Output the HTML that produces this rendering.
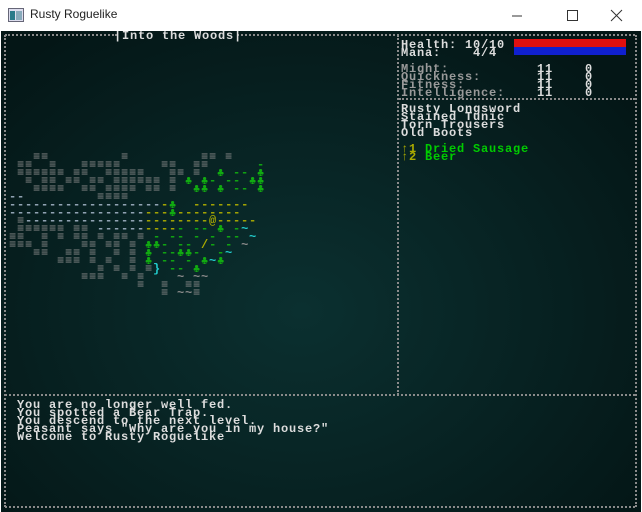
<!DOCTYPE html>
<html><head><meta charset="utf-8"><style>
*{margin:0;padding:0;box-sizing:border-box}
body{width:642px;height:512px;overflow:hidden;background:#fff;font-family:"Liberation Sans",sans-serif;position:relative}
#tb{position:absolute;left:0;top:0;width:642px;height:31px;background:#fff}
#tb .t{position:absolute;left:30px;top:7px;font-size:12px;color:#222}
#term{position:absolute;left:1px;top:31px;width:640px;height:481px;background:radial-gradient(ellipse 420px 340px at 300px 280px,#0b3030 0%,#072222 55%,#041616 100%);overflow:hidden}
.tx{position:absolute;font-family:"Liberation Mono",monospace;font-weight:bold;font-size:12px;letter-spacing:0.8px;line-height:8px;white-space:pre;color:#ddd}
.h{position:absolute;border-top:2px dotted #8a8a8a}
.v{position:absolute;border-left:2px dotted #8a8a8a}
.w{color:#8a8a8a}.f{color:#9ab}.y{color:#aa0}.g{color:#1a1}.G{color:#0c0}.c{color:#2cc}
</style></head><body>
<div id="tb">
<svg style="position:absolute;left:8px;top:8px" width="16" height="14"><rect x="0.5" y="0.5" width="15" height="13" fill="#dde" stroke="#667"/><rect x="2" y="3" width="5" height="9" fill="#2a7a8a"/><rect x="8" y="3" width="6" height="9" fill="#8ab"/></svg>
<div class="t">Rusty Roguelike</div>
<svg style="position:absolute;left:512px;top:9px" width="120" height="14"><line x1="0" y1="7" x2="10" y2="7" stroke="#333"/><rect x="55.5" y="1.5" width="10" height="10" fill="none" stroke="#333"/><path d="M99 1 L110 12 M110 1 L99 12" stroke="#333"/></svg>
</div>
<div id="term">
<div class="h" style="left:4px;top:3px;width:112px"></div>
<div class="h" style="left:236px;top:3px;width:398px"></div>
<div class="tx" style="left:113px;top:1px">|Into the Woods|</div>
<div class="v" style="left:3px;top:4px;height:472px"></div>
<div class="v" style="left:634px;top:4px;height:472px"></div>
<div class="v" style="left:396px;top:4px;height:360px"></div>
<div class="h" style="left:398px;top:67px;width:236px"></div>
<div class="h" style="left:4px;top:363px;width:630px"></div>
<div class="h" style="left:4px;top:475px;width:630px"></div>

<div class="tx" style="left:400px;top:10px">Health: 10/10
Mana:    4/4</div>
<div style="position:absolute;left:513px;top:8px;width:112px;height:8px;background:#e01010"></div>
<div style="position:absolute;left:513px;top:16px;width:112px;height:8px;background:#1020d0"></div>
<div class="tx" style="left:400px;top:34px;color:#9a9a9a">Might:
Quickness:
Fitness:
Intelligence:</div>
<div class="tx" style="left:536px;top:34px">11    0
11    0
11    0
11    0</div>
<div class="tx" style="left:400px;top:74px">Rusty Longsword
Stained Tunic
Torn Trousers
Old Boots</div>
<div class="tx" style="left:400px;top:114px"><span class="y">↑1</span> <span class="G">Dried Sausage</span>
<span class="y">↑2</span> <span class="G">Beer</span></div>

<div class="tx" style="left:16px;top:370px">You are no longer well fed.
You spotted a Bear Trap.
You descend to the next level.
Peasant says "Why are you in my house?"
Welcome to Rusty Roguelike</div>

<div class="tx" style="left:8px;top:122px"><span class="w">   ≡≡         ≡         ≡≡ ≡</span>
<span class="w"> ≡≡  ≡   ≡≡≡≡≡     ≡≡  ≡≡   </span><span class="g">   -</span>
<span class="w"> ≡≡≡≡≡≡ ≡≡  ≡≡≡≡≡   ≡≡ ≡</span><span class="g">  ♣ -- ♣</span>
<span class="w">  ≡ ≡≡ ≡≡ ≡≡ ≡≡≡≡≡≡ ≡ </span><span class="g">♣ ♣- -- ♣♣</span>
<span class="w">   ≡≡≡≡  ≡≡ ≡≡≡≡ ≡≡ ≡</span><span class="g">  ♣♣ ♣ -- ♣</span>
<span class="f">--</span><span class="w">         ≡≡≡≡</span>
<span class="f">-------------------</span><span class="y">-</span><span class="g">♣</span><span class="y">  -------</span>
<span class="f">-----------------</span><span class="y">---</span><span class="g">♣</span><span class="y">--------</span>
<span class="w"> ≡</span><span class="f">---------------</span><span class="y">--------@-----</span>
<span class="w"> ≡≡≡≡≡≡ ≡≡ </span><span class="f">------</span><span class="y">----</span><span class="g">- -- ♣ -</span><span class="c">~</span>
<span class="w">≡≡  ≡ ≡ ≡≡ ≡ ≡≡ ≡ </span><span class="g">- -- - - -- </span><span class="c">~</span>
<span class="w">≡≡≡ ≡    ≡≡ ≡≡ ≡ </span><span class="g">♣♣- -- </span><span class="y">/</span><span class="g">- - </span><span class="w">~</span>
<span class="w">   ≡≡  ≡≡ ≡  ≡ ≡ </span><span class="g">♣ --♣♣-  -</span><span class="c">~</span>
<span class="w">      ≡≡≡ ≡ ≡  ≡ </span><span class="g">♣ -- - ♣</span><span class="c">~</span><span class="g">♣</span>
<span class="w">           ≡ ≡ ≡ ≡</span><span class="c">}</span><span class="g"> -- ♣  </span>
<span class="w">         ≡≡≡  ≡ ≡  </span><span class="w">  ~ ~~</span>
<span class="w">                ≡  ≡  ≡≡</span>
<span class="w">                   ≡ ~~≡</span></div>
</div>
</body></html>
